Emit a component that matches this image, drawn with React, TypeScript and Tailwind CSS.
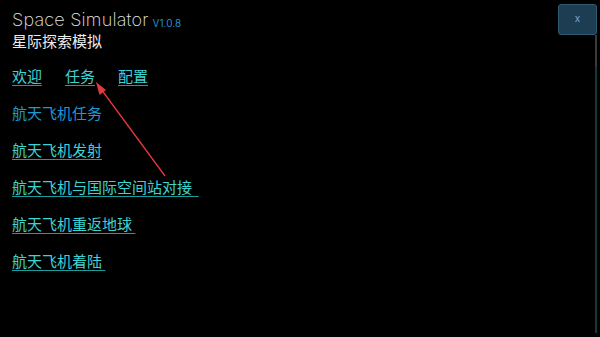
import React from "react"

const links = [
  { label: "航天飞机任务", active: true },
  { label: "航天飞机发射" },
  { label: "航天飞机与国际空间站对接  " },
  { label: "航天飞机重返地球 " },
  { label: "航天飞机着陆 " },
]

const cjk = { fontFamily: '"Noto Sans CJK SC", "Noto Sans", sans-serif' }

export default function App() {
  return (
    <div className="relative h-[337px] w-[600px] overflow-hidden bg-black">
      <div className="flex flex-col pl-3 pt-[9px]">
        {/* header */}
        <div className="flex items-end gap-[4px]">
          <span className="text-[18px] font-extralight leading-[22px] tracking-[0.2px] text-[#e6e6e6]" style={{ fontFamily: "Inter, sans-serif" }}>
            Space Simulator
          </span>
          <span className="mb-[2px] text-[10px] leading-[12px] text-[#1f8fd6]" style={{ fontFamily: "Inter, sans-serif" }}>
            V1.0.8
          </span>
        </div>
        <div className="text-[15px] leading-[20px] text-[#ededed]" style={cjk}>
          星际探索模拟
        </div>

        {/* nav */}
        <div className="mt-[15px] flex gap-[23px] text-[15px] leading-[20px]" style={cjk}>
          {["欢迎", "任务", "配置"].map((t) => (
            <span key={t} className="text-[#3ed3d3] underline decoration-[#1c9c9c] underline-offset-[3px]">
              {t}
            </span>
          ))}
        </div>

        {/* mission list */}
        <div className="mt-[17px] flex flex-col gap-[17px] text-[15px] leading-[20px]" style={cjk}>
          {links.map((l) => (
            <span
              key={l.label}
              className={
                l.active
                  ? "whitespace-pre text-[#1e97d4]"
                  : "whitespace-pre text-[#3ed3d3] underline decoration-[#1c9c9c] underline-offset-[3px]"
              }
            >
              {l.label}
            </span>
          ))}
        </div>
      </div>

      {/* close button */}
      <button className="absolute right-[3px] top-[4px] flex h-[31px] w-[39px] items-center justify-center rounded-[3px] border border-[#2f5a73] bg-[#1c3d52] pb-[2px] text-[10px] text-[#7ea6cc]" style={{ fontFamily: "Inter, sans-serif" }}>
        x
      </button>

      {/* scroll line */}
      <div className="absolute right-[3px] top-[35px] flex h-[298px] w-[2px] flex-col">
        <div className="h-[32px] bg-[#3a3a3a]" />
        <div className="flex-1 bg-[#123a3e]" />
      </div>

      {/* annotation arrow */}
      <svg className="pointer-events-none absolute left-0 top-0" width="600" height="337">
        <line x1="165" y1="176" x2="101" y2="89" stroke="#e0393e" strokeWidth="1.3" />
        <polygon points="96,82 99.5,95 106,90" fill="#e0393e" />
      </svg>
    </div>
  )
}
